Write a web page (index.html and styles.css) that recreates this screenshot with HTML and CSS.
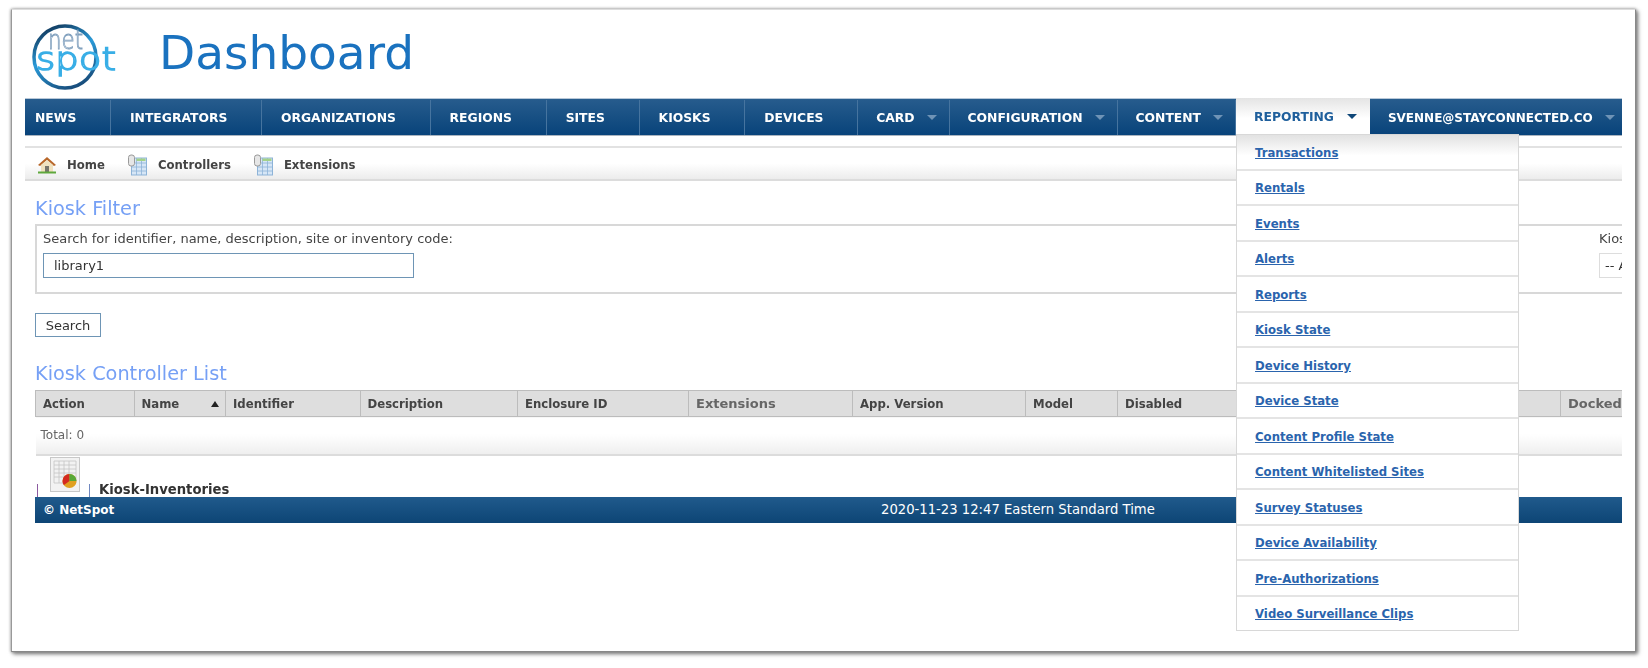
FILE: index.html
```html
<!DOCTYPE html>
<html lang="en">
<head>
<meta charset="utf-8">
<title>Dashboard</title>
<link rel="stylesheet" href="styles.css">
</head>
<body>
<div class="frame">
<div class="page">
  <header class="masthead">
    <svg class="logo" width="92" height="72" viewBox="0 0 92 72" aria-label="NetSpot logo">
      <defs>
        <linearGradient id="ring" x1="0.25" y1="0" x2="0.7" y2="1">
          <stop offset="0" stop-color="#123a5e"/>
          <stop offset="0.45" stop-color="#2a9ad8"/>
          <stop offset="1" stop-color="#174a78"/>
        </linearGradient>
      </defs>
      <circle cx="34" cy="35" r="31" fill="none" stroke="url(#ring)" stroke-width="3.500"/>
      <text x="17" y="27" class="logo-net" textLength="35" lengthAdjust="spacingAndGlyphs">net</text>
      <text x="5" y="48" class="logo-spot" textLength="80" lengthAdjust="spacingAndGlyphs">spot</text>
    </svg>
    <h1 class="title">Dashboard</h1>
  </header>

  <nav class="nav">
    <a class="nav-item first">NEWS</a>
    <a class="nav-item">INTEGRATORS</a>
    <a class="nav-item">ORGANIZATIONS</a>
    <a class="nav-item">REGIONS</a>
    <a class="nav-item">SITES</a>
    <a class="nav-item">KIOSKS</a>
    <a class="nav-item">DEVICES</a>
    <a class="nav-item has-caret">CARD<i class="caret"></i></a>
    <a class="nav-item has-caret">CONFIGURATION<i class="caret"></i></a>
    <a class="nav-item has-caret">CONTENT<i class="caret"></i></a>
    <div class="nav-item has-caret active">REPORTING<i class="caret"></i>
      <ul class="menu">
        <li><a>Transactions</a></li>
        <li><a>Rentals</a></li>
        <li><a>Events</a></li>
        <li><a>Alerts</a></li>
        <li><a>Reports</a></li>
        <li><a>Kiosk State</a></li>
        <li><a>Device History</a></li>
        <li><a>Device State</a></li>
        <li><a>Content Profile State</a></li>
        <li><a>Content Whitelisted Sites</a></li>
        <li><a>Survey Statuses</a></li>
        <li><a>Device Availability</a></li>
        <li><a>Pre-Authorizations</a></li>
        <li><a>Video Surveillance Clips</a></li>
      </ul>
    </div>
    <a class="nav-item has-caret user">SVENNE@STAYCONNECTED.CO<i class="caret"></i></a>
  </nav>

  <div class="toolbar">
    <a class="tool">
      <svg width="20" height="20" viewBox="0 0 20 20"><path d="M1 10 10 2l9 8-2 1-7-6-7 6z" fill="#b8672a"/><path d="M4 10l6-5 6 5v7H4z" fill="#f0e2c0"/><rect x="8" y="11" width="4" height="6" fill="#77756c"/><rect x="1" y="16.500" width="18" height="2" fill="#5fa83c"/></svg>
      Home
    </a>
    <a class="tool">
      <svg width="21" height="22" viewBox="0 0 20 22"><rect x="4" y="4" width="15" height="17" fill="#d6e6f6" stroke="#8db3d8"/><path d="M4 9h15M4 13h15M4 17h15M9 4v17M14 4v17" stroke="#8db3d8" stroke-width=".8"/><rect x="9" y="4.500" width="9" height="2.500" fill="#a4d28a"/><rect x="1" y="1" width="6" height="11" rx="2.500" fill="#e6e6e6" stroke="#9a9a9a"/></svg>
      Controllers
    </a>
    <a class="tool">
      <svg width="21" height="22" viewBox="0 0 20 22"><rect x="4" y="4" width="15" height="17" fill="#d6e6f6" stroke="#8db3d8"/><path d="M4 9h15M4 13h15M4 17h15M9 4v17M14 4v17" stroke="#8db3d8" stroke-width=".8"/><rect x="9" y="4.500" width="9" height="2.500" fill="#a4d28a"/><rect x="1" y="1" width="6" height="11" rx="2.500" fill="#e6e6e6" stroke="#9a9a9a"/></svg>
      Extensions
    </a>
  </div>

  <main class="content">
    <h2 class="section-title filter-title">Kiosk Filter</h2>
    <div class="filter-box">
      <div class="filter-main">
        <label class="filter-label">Search for identifier, name, description, site or inventory code:</label>
        <div class="text-input">library1</div>
      </div>
      <div class="filter-side">
        <label class="filter-label">Kiosk Type:</label>
        <div class="select-input">-- All --</div>
      </div>
    </div>
    <button class="search-btn">Search</button>

    <h2 class="section-title list-title">Kiosk Controller List</h2>
    <table class="grid">
      <colgroup>
        <col class="c-action"><col class="c-name"><col class="c-id"><col class="c-desc"><col class="c-encl"><col class="c-ext"><col class="c-ver"><col class="c-model"><col class="c-dis"><col class="c-dock">
      </colgroup>
      <thead>
        <tr>
          <th>Action</th>
          <th><span class="sort">Name<i class="sort-arrow"></i></span></th>
          <th>Identifier</th>
          <th>Description</th>
          <th>Enclosure ID</th>
          <th class="muted">Extensions</th>
          <th>App. Version</th>
          <th>Model</th>
          <th>Disabled</th>
          <th class="muted">Docked</th>
        </tr>
      </thead>
      <tfoot>
        <tr><td colspan="10">Total: 0</td></tr>
      </tfoot>
    </table>

    <div class="inventories">
      <span class="bar bar-purple"></span>
      <svg class="inv-icon" width="30" height="35" viewBox="0 0 30 35">
        <rect x=".5" y=".5" width="29" height="34" fill="#f2f2f2" stroke="#c8c8c8"/>
        <path d="M4 4h22v22H4zM4 8h22M4 12h22M4 16h22M4 20h22M9 4v22M14 4v22M19 4v22" fill="none" stroke="#c4c4c4" stroke-width=".8"/>
        <circle cx="19.500" cy="24" r="7" fill="#e0a020"/>
        <path d="M19.500 24V17a7 7 0 0 0-7 7c0 1.500.5 3 1.500 4z" fill="#d42a20"/>
        <path d="M19.500 24V17a7 7 0 0 1 7 7z" fill="#58a838"/>
      </svg>
      <span class="bar bar-blue"></span>
      <strong class="inv-label">Kiosk-Inventories</strong>
    </div>
    <footer class="footer">
      <span class="copy">© NetSpot</span>
      <span class="clock">2020-11-23 12:47 Eastern Standard Time</span>
    </footer>
  </main>
</div>
</div>
</body>
</html>
```
FILE: styles.css
```css
* { box-sizing: border-box; }
html, body { margin: 0; padding: 0; background: #fff; }
body { font-family: "DejaVu Sans", Verdana, sans-serif; color: #333; width: 1648px; height: 668px; overflow: hidden; }

.frame {
  width: 1625px; height: 643px; margin: 9px 0 0 11px;
  padding: 0 14px 0 13px; background: #fff;
  border-left: 1px solid #999; border-right: 1px solid #888; border-bottom: 1px solid #888;
  border-top: 1px solid #ddd;
  box-shadow: 0 0 3px #888, 2px 2px 4px #777;
  filter: blur(.35px);
}
.page { position: relative; width: 1597px; height: 641px; overflow: hidden; }

.masthead { display: flex; align-items: flex-start; height: 88px; }
.logo { margin: 12px 0 0 6px; flex: none; }
.logo-net { font: 300 26px "DejaVu Sans", sans-serif; fill: none; stroke: #7f9fbd; stroke-width: .9; }
.logo-spot { font: 300 32px "DejaVu Sans", sans-serif; fill: #fff; stroke: #38aee6; stroke-width: 1.500; }
.title { margin: 15px 0 0 36px; font-size: 47px; line-height: 56px; font-weight: 400; color: #1a72bf; }

.nav { display: flex; height: 38px; background: linear-gradient(#275c8d, #08437a); border-bottom: 1px solid #aab4bf; border-top: 1px solid #b8c8d8; }
.nav-item { position: relative; display: flex; align-items: center; height: 35px; margin-top: 1px; padding: 0 33.700px 0 19px; font-size: 12.350px; font-weight: 700; color: #fff; white-space: nowrap; border-right: 1px solid #46749f; }
.nav-item.first { padding-left: 10px; }
.nav-item.has-caret { padding: 0 12px 0 18px; }
.caret { width: 0; height: 0; margin-left: 12px; border: 5px solid transparent; border-top-color: #6f93b6; border-bottom: 0; }
.nav-item.active { height: 37px; margin-top: -1px; padding: 0 13px 0 18px; background: linear-gradient(#e4e4e4, #fff 55%); color: #1f5f9c; border-right: 0; }
.nav-item.active .caret { margin-left: 13px; border-top-color: #0f4778; }
.nav-item.user { border-right: 0; flex: 1; padding-left: 18px; font-size: 12px; }

.menu { position: absolute; top: 36px; left: 0; width: 283px; margin: 0; padding: 0; list-style: none; background: #fff; border: 1px solid #d8d8d8; z-index: 3; }
.menu li { height: 35.500px; display: flex; align-items: center; padding: 2px 0 0 18px; border-bottom: 2px solid #e4e4e4; }
.menu li:first-child { background: linear-gradient(#e2e2e2, #fff 60%); }
.menu li:last-child { height: 33px; border-bottom: 0; }
.menu a { font-size: 11.700px; font-weight: 700; color: #2a64ad; text-decoration: underline; }

.toolbar { display: flex; align-items: center; height: 35px; margin-top: 10px; padding: 2px 0 0 12px; border-top: 2px solid #e2e2e2; border-bottom: 2px solid #dcdcdc; background: linear-gradient(#fff 50%, #ececec); }
.tool { display: flex; align-items: center; gap: 10px; margin-right: 22px; font-size: 11.700px; font-weight: 700; color: #444; }

.content { padding-left: 10px; }
.section-title { margin: 0; font-size: 19.300px; font-weight: 400; line-height: 22px; color: #76a0f5; }
.filter-title { margin-top: 17px; }
.filter-box { display: flex; width: 1700px; height: 70px; margin-top: 4px; padding: 5px 6px; border: 2px solid #d8d8d8; }
.filter-main { flex: 0 0 1556px; }
.filter-side { flex: none; }
.filter-label { display: block; font-size: 13px; line-height: 16px; color: #444; white-space: nowrap; }
.text-input { width: 371px; height: 25px; margin-top: 6px; padding-left: 10px; border: 1px solid #6e95b5; font-size: 13px; line-height: 23px; color: #333; }
.select-input { width: 120px; height: 25px; margin-top: 6px; padding-left: 5px; border: 1px solid #ddd; font-size: 13px; line-height: 23px; }
.search-btn { display: block; width: 66px; height: 24px; margin: 19px 0 0; padding: 0; font: 13px "DejaVu Sans", sans-serif; color: #333; background: #fff; border: 1px solid #6e95b5; border-radius: 0; }
.list-title { margin-top: 26px; }

.grid { width: 1640px; table-layout: fixed; border-collapse: collapse; margin-top: 5px; }
.c-action { width: 98.500px; } .c-name { width: 91.500px; } .c-id { width: 134.500px; } .c-desc { width: 157.500px; }
.c-encl { width: 171px; } .c-ext { width: 164px; } .c-ver { width: 173px; } .c-model { width: 92px; } .c-dis { width: 443px; } .c-dock { width: 115px; }
.grid th { height: 26px; padding: 0 0 0 7px; text-align: left; font-size: 11.700px; font-weight: 700; color: #444; background: #dedede; border: 1px solid #bcbcbc; }
.grid th.muted { font-size: 13px; color: #666; }
.sort { display: flex; align-items: center; justify-content: space-between; padding-right: 6px; }
.sort-arrow { width: 0; height: 0; border: 4px solid transparent; border-bottom: 6px solid #222; border-top: 0; }
.grid td { height: 38px; padding: 0 0 0 5px; font-size: 12px; color: #666; border-bottom: 2px solid #dcdcdc; background: linear-gradient(#fff 45%, #eee); }

.inventories { display: flex; align-items: flex-end; height: 41px; padding-left: 2px; }
.bar { width: 1px; height: 13px; flex: none; }
.bar-purple { background: #8c5aa0; }
.bar-blue { background: #7088c0; margin-left: 9px; }
.inv-icon { margin: 0 0 5px 12px; flex: none; }
.inv-label { margin-left: 9px; font-size: 13.200px; line-height: 15px; color: #333; }

.footer { position: relative; display: flex; align-items: center; height: 26px; padding-left: 8px; font-size: 12px; color: #fff; background: linear-gradient(#205a8c, #0d4575); }
.copy { font-weight: 700; }
.clock { position: absolute; left: 846px; font-size: 13.200px; }
```
